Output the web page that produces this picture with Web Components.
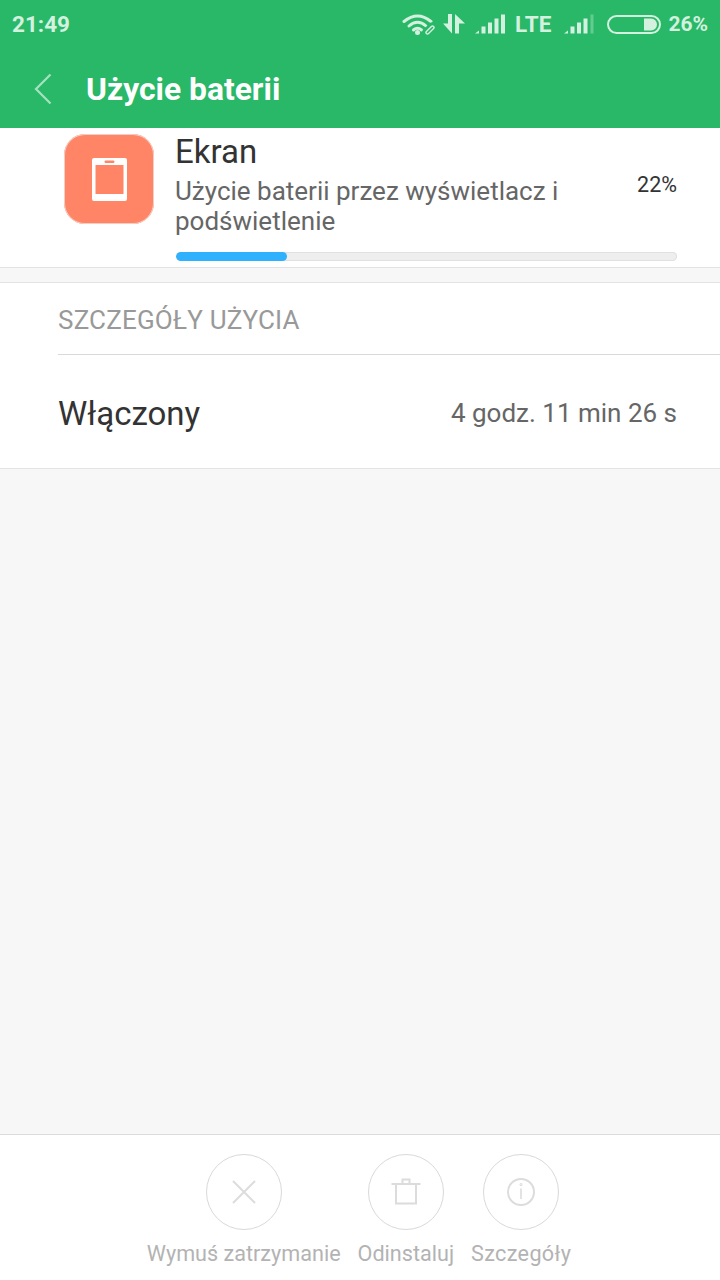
<!DOCTYPE html>
<html lang="pl">
<head>
<meta charset="utf-8">
<title>Użycie baterii</title>
<style>
  html, body { margin: 0; height: 100%; }
  body { font-family: Roboto, sans-serif; background: #f7f7f7; }
</style>
</head>
<body>
<battery-screen>
  <status-bar slot="top"></status-bar>
  <app-bar slot="top" title="Użycie baterii"></app-bar>
  <usage-entry label="Ekran" percent="22" description="Użycie baterii przez wyświetlacz i podświetlenie"></usage-entry>
  <usage-details heading="SZCZEGÓŁY UŻYCIA" label="Włączony" value="4 godz. 11 min 26 s"></usage-details>
  <action-bar slot="bottom">
    <action-button label="Wymuś zatrzymanie" icon="close"></action-button>
    <action-button label="Odinstaluj" icon="trash"></action-button>
    <action-button label="Szczegóły" icon="info" style="letter-spacing:.33px"></action-button>
  </action-bar>
</battery-screen>

<script>
class BatteryScreen extends HTMLElement {
  constructor() {
    super();
    this.attachShadow({ mode: "open" }).innerHTML = `
      <style>
        :host { display: flex; flex-direction: column; height: 1280px; width: 720px; overflow: hidden; }
        .content { flex-grow: 1; }
      </style>
      <slot name="top"></slot>
      <div class="content"><slot></slot></div>
      <slot name="bottom"></slot>`;
  }
}

class StatusBar extends HTMLElement {
  constructor() {
    super();
    const c = "#d4f0df";
    const g = "#28b868";
    this.attachShadow({ mode: "open" }).innerHTML = `
      <style>
        :host { display: flex; align-items: center; height: 50px; padding: 0 12px 2px 12px; box-sizing: border-box; background: ${g}; color: ${c}; font: 700 21px Roboto, sans-serif; }
        .time { flex-grow: 1; font-size: 22.500px; }
        .icons { display: flex; align-items: center; }
        svg { display: block; }
        .lte { font-size: 22.500px; margin: 0 13px 0 10px; }
        .pct { margin-left: 7px; }
      </style>
      <span class="time">21:49</span>
      <span class="icons">
        <svg width="33" height="22" viewBox="0 0 33 22" fill="none" stroke="${c}" stroke-width="3" stroke-linecap="round">
          <path d="M2 8.500 Q15.500 -2.500 29 8.500"/><path d="M7 13 Q15.500 5.500 24 13"/><path d="M11.500 17 Q15.500 13.500 19.500 17"/>
          <circle cx="15.500" cy="19.500" r="2.500" fill="${c}" stroke="none"/>
          <path d="M24.500 19.500 L30.500 13.500" stroke="${g}" stroke-width="8.500"/>
          <path d="M25.500 19.500 L30.500 14.500" stroke-width="4.400"/>
          <path d="M25.500 19.500 L30.500 14.500" stroke="${g}" stroke-width="1.600"/>
        </svg>
        <svg style="margin-left:8px" width="22" height="20" viewBox="0 0 22 20" fill="${c}">
          <path d="M0 9.500H5V0H9V19.500z"/><path d="M12 0L22 9.500H16V19.500H12z"/>
        </svg>
        <svg style="margin-left:10px" width="30" height="20" viewBox="0 0 30 20" fill="${c}">
          <path d="M0 19.500 L4 16.500 V19.500z"/><rect x="6.500" y="12.500" width="4" height="7"/><rect x="13" y="8.500" width="4" height="11"/><rect x="19.500" y="4.500" width="4" height="15"/><rect x="26" y="0.500" width="4" height="19"/>
        </svg>
        <span class="lte">LTE</span>
        <svg width="30" height="20" viewBox="0 0 30 20" fill="${c}">
          <path d="M0 19.500 L4 16.500 V19.500z"/><rect x="6.500" y="12.500" width="4" height="7"/><rect x="13" y="8.500" width="4" height="11"/><rect x="19.500" y="4.500" width="4" height="15"/><rect x="26.500" y="0.500" width="3" height="19" opacity=".35"/>
        </svg>
        <svg style="margin-left:13px" width="54" height="19" viewBox="0 0 54 19" fill="none">
          <rect x="1" y="1" width="52" height="17" rx="8.500" stroke="${c}" stroke-width="2"/>
          <path d="M37 3.500h7a6 6 0 0 1 0 12h-7z" fill="${c}"/>
        </svg>
        <span class="pct">26%</span>
      </span>`;
  }
}

class AppBar extends HTMLElement {
  constructor() {
    super();
    this.attachShadow({ mode: "open" }).innerHTML = `
      <style>
        :host { display: flex; align-items: center; height: 78px; padding: 0 0 0 34px; box-sizing: border-box; background: #28b868; color: #fff; }
        svg { display: block; }
        .title { margin-left: 34px; font: 700 31.800px Roboto, sans-serif; }
      </style>
      <svg width="18" height="32" viewBox="0 0 18 32" fill="none" stroke="#a4e2bf" stroke-width="2.200"><path d="M16.500 1.500 L2 16 L16.500 30.500"/></svg>
      <span class="title"></span>`;
    this.shadowRoot.querySelector(".title").textContent = this.getAttribute("title");
  }
}

class UsageEntry extends HTMLElement {
  constructor() {
    super();
    this.attachShadow({ mode: "open" }).innerHTML = `
      <style>
        :host { display: block; height: 140px; box-sizing: border-box; background: #fff; border-bottom: 1px solid #e3e3e3; padding: 5px 43px 0 64px; }
        .row { display: flex; }
        .icon { width: 90px; height: 90px; margin-top: 1px; flex-shrink: 0; border-radius: 21px; background: #ff8566; box-shadow: inset 0 0 0 1px #f3cfc3; display: flex; align-items: center; justify-content: center; }
        svg { display: block; }
        .text { margin-left: 21px; flex-grow: 1; min-width: 0; }
        .label { font-size: 33px; line-height: 38px; color: #333; }
        .desc { font-size: 26px; line-height: 30px; color: #666; margin-top: 5px; width: 420px; }
        .pct { font-size: 21.500px; color: #333; margin-top: 39px; }
        .body { display: flex; justify-content: space-between; }
        .bar { height: 9px; margin: 16px 0 0 112px; background: #eee; box-shadow: inset 0 0 0 1px #e0e0e0; border-radius: 5px; overflow: hidden; }
        .fill { height: 100%; background: #2fb1fd; border-radius: 5px; }
      </style>
      <div class="row">
        <div class="icon">
          <svg width="35" height="43" viewBox="0 0 35 43">
            <path fill="#fff" fill-rule="evenodd" d="M2 0h31a2 2 0 0 1 2 2v39a2 2 0 0 1-2 2H2a2 2 0 0 1-2-2V2a2 2 0 0 1 2-2zM3.500 7v29h28V7z"/>
            <rect x="12.500" y="2.500" width="10" height="2.500" rx="1.200" fill="#ff8566"/>
          </svg>
        </div>
        <div class="text body">
          <div>
            <div class="label"></div>
            <div class="desc"></div>
          </div>
          <div class="pct"></div>
        </div>
      </div>
      <div class="bar"><div class="fill"></div></div>`;
    const s = this.shadowRoot;
    const percent = this.getAttribute("percent");
    s.querySelector(".label").textContent = this.getAttribute("label");
    s.querySelector(".desc").textContent = this.getAttribute("description");
    s.querySelector(".pct").textContent = percent + "%";
    s.querySelector(".fill").style.width = `calc(${percent}% + 1px)`;
  }
}

class UsageDetails extends HTMLElement {
  constructor() {
    super();
    this.attachShadow({ mode: "open" }).innerHTML = `
      <style>
        :host { display: block; margin-top: 14px; background: #fff; border-top: 1px solid #e3e3e3; border-bottom: 1px solid #e3e3e3; padding-left: 58px; }
        .heading { height: 72px; line-height: 74px; box-sizing: border-box; border-bottom: 1px solid #d9d9d9; font-size: 26px; letter-spacing: .2px; color: #999; }
        .row { display: flex; justify-content: space-between; align-items: center; height: 113px; box-sizing: border-box; padding: 3px 43px 0 0; }
        .label { font-size: 33px; color: #333; }
        .value { font-size: 26px; color: #666; }
      </style>
      <div class="heading"></div>
      <div class="row"><span class="label"></span><span class="value"></span></div>`;
    const s = this.shadowRoot;
    s.querySelector(".heading").textContent = this.getAttribute("heading");
    s.querySelector(".label").textContent = this.getAttribute("label");
    s.querySelector(".value").textContent = this.getAttribute("value");
  }
}

class ActionBar extends HTMLElement {
  constructor() {
    super();
    this.attachShadow({ mode: "open" }).innerHTML = `
      <style>
        :host { display: flex; justify-content: center; gap: 17px; height: 146px; box-sizing: border-box; background: #fff; border-top: 1px solid #dcdcdc; padding: 19px 2px 0 0; }
      </style>
      <slot></slot>`;
  }
}

const actionIcons = {
  close: `<path d="M13 13 L35 35 M35 13 L13 35"/>`,
  trash: `<path d="M9.500 16 H38.500 M14 16 V35.500 H34 V16 M20.500 16 V11.500 H27.500 V16"/>`,
  info: `<circle cx="24" cy="24" r="13"/><path d="M24 20.500 V31" stroke-width="1.600"/><circle cx="24" cy="16.500" r=".5"/>`
};

class ActionButton extends HTMLElement {
  constructor() {
    super();
    this.attachShadow({ mode: "open" }).innerHTML = `
      <style>
        :host { display: flex; flex-direction: column; align-items: center; color: #b3b3b3; font-size: 21.600px; }
        .circle { width: 76px; height: 76px; box-sizing: border-box; border: 1px solid #d9d9d9; border-radius: 50%; display: flex; align-items: center; justify-content: center; }
        svg { display: block; fill: none; stroke: #dcdcdc; stroke-width: 2; }
        .label { margin-top: 11px; white-space: nowrap; }
      </style>
      <div class="circle"><svg width="48" height="48" viewBox="0 0 48 48">${actionIcons[this.getAttribute("icon")]}</svg></div>
      <div class="label"></div>`;
    this.shadowRoot.querySelector(".label").textContent = this.getAttribute("label");
  }
}

customElements.define("battery-screen", BatteryScreen);
customElements.define("status-bar", StatusBar);
customElements.define("app-bar", AppBar);
customElements.define("usage-entry", UsageEntry);
customElements.define("usage-details", UsageDetails);
customElements.define("action-bar", ActionBar);
customElements.define("action-button", ActionButton);
</script>
</body>
</html>
